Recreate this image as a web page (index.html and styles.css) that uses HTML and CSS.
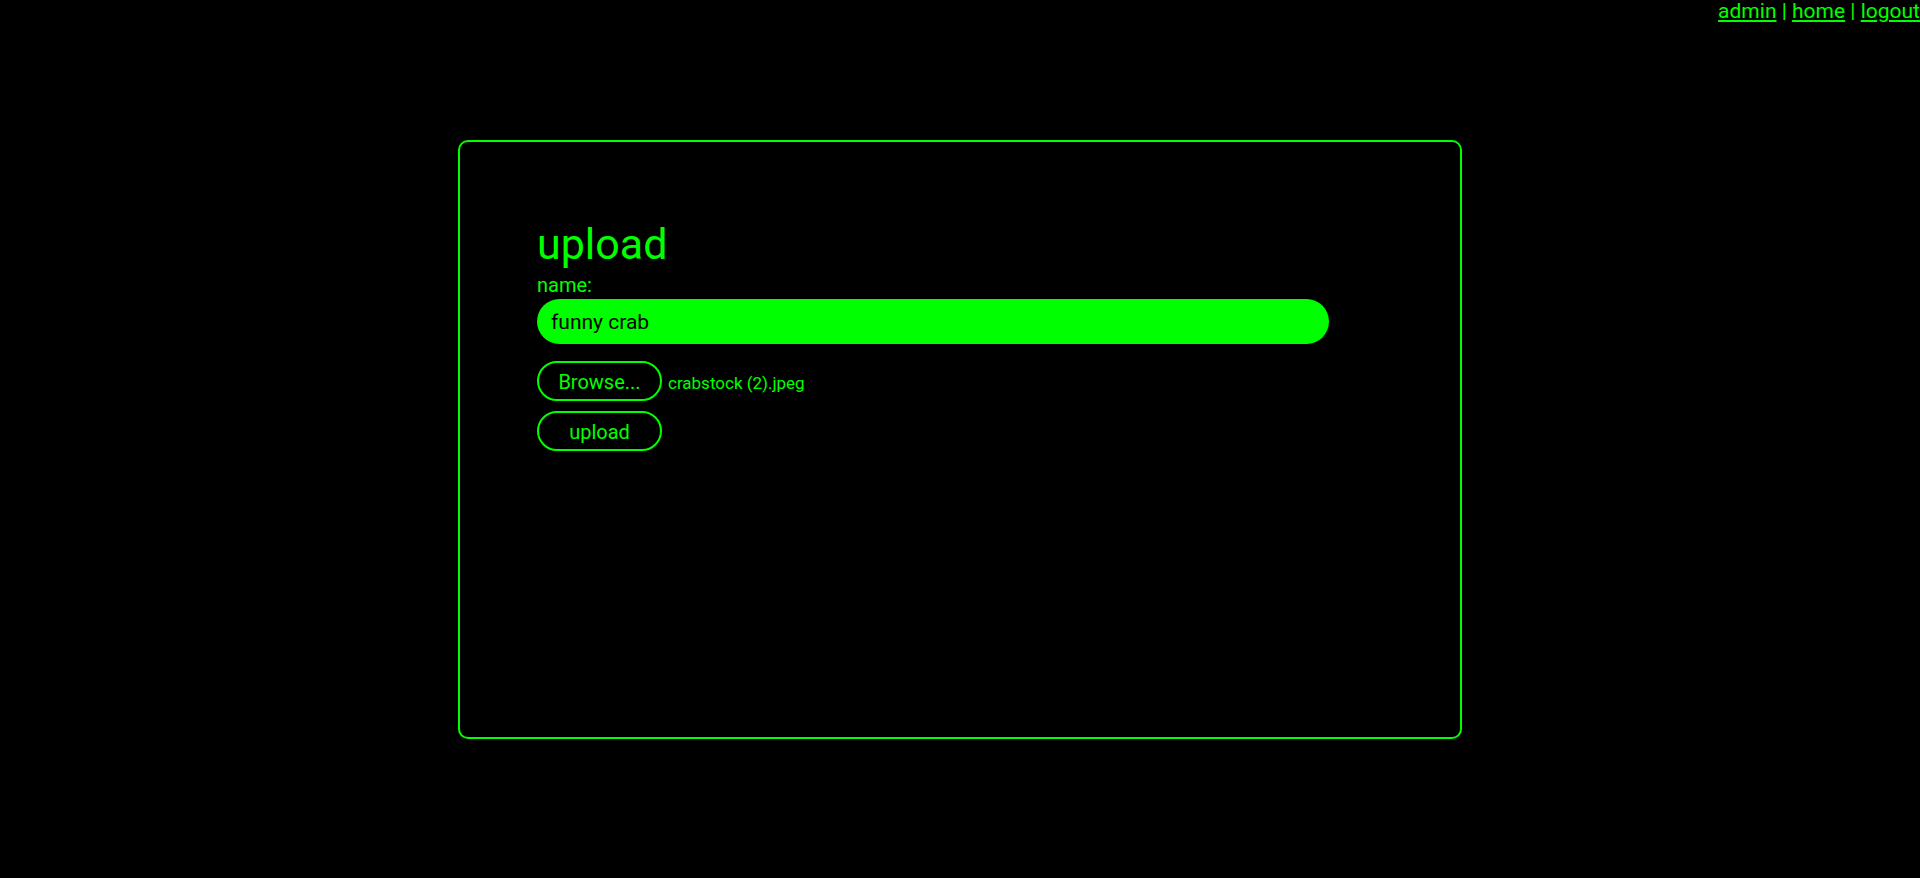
FILE: index.html
```html
<!DOCTYPE html>
<html lang="en">
<head>
<meta charset="utf-8">
<title>upload</title>
<link rel="stylesheet" href="styles.css">
</head>
<body>
<nav class="topnav">
  <a href="#">admin</a> | <a href="#">home</a> | <a href="#">logout</a>
</nav>
<main class="panel">
  <form class="upload-form">
    <h1 class="title">upload</h1>
    <label class="field-label" for="name">name:</label>
    <input class="name-input" id="name" type="text" value="funny crab">
    <div class="file-row">
      <span class="btn">Browse...</span>
      <span class="file-name">crabstock (2).jpeg</span>
    </div>
    <div class="submit-row">
      <button class="btn" type="button">upload</button>
    </div>
  </form>
</main>
</body>
</html>
```

FILE: styles.css
```css
html, body {
  margin: 0;
  padding: 0;
  background: #000;
  color: #00ff00;
  font-family: Roboto, "Noto Sans", sans-serif;
}

.topnav {
  text-align: right;
  font-size: 21px;
  line-height: 22px;
  height: 22px;
  color: #00ff00;
}

.topnav a {
  color: #00ff00;
  text-decoration: underline;
}

.panel {
  box-sizing: border-box;
  width: 1004px;
  height: 599px;
  margin: 118px auto 0;
  border: 2px solid #00ff00;
  border-radius: 10px;
  padding: 76px 77px 0;
}

.upload-form {
  display: flex;
  flex-direction: column;
  align-items: flex-start;
}

.title {
  margin: 0;
  font-size: 43px;
  font-weight: 400;
  line-height: 52px;
}

.field-label {
  margin-top: 1px;
  font-size: 20px;
  line-height: 28px;
}

.name-input {
  box-sizing: border-box;
  width: 792px;
  height: 45px;
  margin: 0;
  border: none;
  border-radius: 23px;
  background: #00ff00;
  color: #000;
  font-family: Roboto, "Noto Sans", sans-serif;
  font-size: 21px;
  padding: 0 14px;
  outline: none;
}

.file-row {
  display: flex;
  align-items: baseline;
  margin-top: 17px;
}

.submit-row {
  display: flex;
  margin-top: 10px;
}

.btn {
  box-sizing: border-box;
  display: inline-flex;
  align-items: center;
  justify-content: center;
  width: 125px;
  height: 40px;
  padding: 1px 0 0;
  border: 2px solid #00ff00;
  border-radius: 20px;
  background: #000;
  color: #00ff00;
  font-family: Roboto, "Noto Sans", sans-serif;
  font-size: 20px;
  line-height: 24px;
}

.file-name {
  margin-left: 6px;
  font-size: 17px;
}
```
